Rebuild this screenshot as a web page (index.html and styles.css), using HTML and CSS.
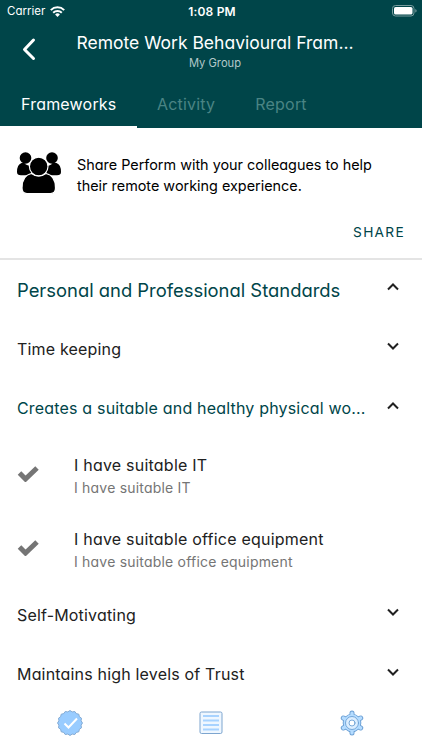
FILE: index.html
```html
<!DOCTYPE html>
<html lang="en">
<head>
<meta charset="UTF-8" />
<meta name="viewport" content="width=device-width, initial-scale=1" />
<title>Remote Work Behavioural Framework</title>
<link rel="stylesheet" href="styles.css">
</head>
<body>
  <header class="header">
    <div class="status-bar">
      <div class="carrier">
        <span>Carrier</span>
        <svg class="wifi" viewBox="0 0 15 11" width="15" height="11" fill="none" stroke="#fff" stroke-width="2">
          <path d="M.8 4.1a9.5 9.5 0 0 1 13.4 0M3.2 6.7a6.1 6.1 0 0 1 8.6 0" />
          <path d="M5.1 8.4a3.5 3.5 0 0 1 4.8 0L7.5 10.9z" fill="#fff" stroke="none" />
        </svg>
      </div>
      <span class="clock">1:08 PM</span>
      <svg class="battery" viewBox="0 0 25 12" width="25" height="12">
        <rect x=".5" y=".5" width="21.500" height="10.500" rx="3" fill="none" stroke="#779b9d" />
        <rect x="2" y="2" width="18.500" height="7.500" rx="1.600" fill="#fff" />
        <path d="M23.300 4v3.600q1.300-.4 1.300-1.800T23.300 4z" fill="#779b9d" />
      </svg>
    </div>
    <div class="title-bar">
      <svg class="back" viewBox="0 0 14 24" width="14" height="24" fill="none" stroke="#fff" stroke-width="3" stroke-linecap="round" stroke-linejoin="round">
        <path d="M11.500 3 2.500 12.500l9 9" />
      </svg>
      <div class="titles">
        <h1>Remote Work Behavioural Fram...</h1>
        <p>My Group</p>
      </div>
    </div>
    <nav class="tabs">
      <a class="tab active">Frameworks</a>
      <a class="tab">Activity</a>
      <a class="tab">Report</a>
    </nav>
  </header>

  <section class="share-card">
    <div class="share-body">
      <svg class="people" viewBox="0 0 44 42" width="44" height="42">
        <circle cx="8.500" cy="6" r="5.800" />
        <circle cx="35" cy="6" r="5.800" />
        <path d="M4.500 11Q0 12.500 0 20q0 3.300 4 3.300h10.500V14Q9 13.500 7.500 11zM39.500 11Q44 12.500 44 20q0 3.300-4 3.300H29.500V14q4.500-.5 6-3z" />
        <path d="M14.500 21.500Q5 23.500 5 36q0 5.500 5 5.500h23.500q5 0 5-5.500 0-12.500-9.500-14.500-7.500 5-14.500 0z" stroke="#fff" stroke-width="1.200" />
        <circle cx="21.700" cy="14.500" r="9.300" stroke="#fff" stroke-width="1.200" />
      </svg>
      <p>Share Perform with your colleagues to help<br>their remote working experience.</p>
    </div>
    <a class="share-btn">SHARE</a>
  </section>

  <main class="list">
    <div class="row open">
      <h2>Personal and Professional Standards</h2>
      <svg class="chevron" viewBox="0 0 12 8"><path d="M1 6.500 6 1.500l5 5" /></svg>
    </div>
    <div class="row">
      <h3>Time keeping</h3>
      <svg class="chevron" viewBox="0 0 12 8"><path d="m1 1.500 5 5 5-5" /></svg>
    </div>
    <div class="row open">
      <h3>Creates a suitable and healthy physical wo...</h3>
      <svg class="chevron" viewBox="0 0 12 8"><path d="M1 6.500 6 1.500l5 5" /></svg>
    </div>
    <div class="item">
      <svg class="check" viewBox="0 0 22 17"><path d="m2.500 8 6 6L20 3" /></svg>
      <div>
        <h4>I have suitable IT</h4>
        <p>I have suitable IT</p>
      </div>
    </div>
    <div class="item">
      <svg class="check" viewBox="0 0 22 17"><path d="m2.500 8 6 6L20 3" /></svg>
      <div>
        <h4>I have suitable office equipment</h4>
        <p>I have suitable office equipment</p>
      </div>
    </div>
    <div class="row">
      <h3>Self-Motivating</h3>
      <svg class="chevron" viewBox="0 0 12 8"><path d="m1 1.500 5 5 5-5" /></svg>
    </div>
    <div class="row">
      <h3>Maintains high levels of Trust</h3>
      <svg class="chevron" viewBox="0 0 12 8"><path d="m1 1.500 5 5 5-5" /></svg>
    </div>
  </main>

  <nav class="bottom-nav">
    <a>
      <svg viewBox="0 0 26 26" width="26" height="26">
        <polygon points="13,.5 15.2,1.9 17.8,1.5 19.3,3.6 21.8,4.2 22.4,6.7 24.5,8.2 24.1,10.8 25.5,13 24.1,15.2 24.5,17.8 22.4,19.3 21.8,21.8 19.3,22.4 17.8,24.5 15.2,24.1 13,25.5 10.8,24.1 8.2,24.5 6.7,22.4 4.2,21.8 3.6,19.3 1.5,17.8 1.9,15.2 .5,13 1.9,10.8 1.5,8.2 3.6,6.7 4.2,4.2 6.7,3.6 8.2,1.5 10.8,1.9" fill="#99ccff" stroke="#7da5cf" stroke-width=".9" />
        <path d="m7.500 13.500 4 4 8.500-9" fill="none" stroke="#fff" stroke-width="2" />
      </svg>
    </a>
    <a>
      <svg viewBox="0 0 26 26" width="26" height="26">
        <rect x="2" y="2" width="22" height="21.500" rx="1.500" fill="#eff7ff" stroke="#7da5cf" />
        <path d="M5 6h16M5 10.500h16M5 15h16M5 19.500h16" stroke="#a8d3ff" stroke-width="2" />
      </svg>
    </a>
    <a>
      <svg viewBox="0 0 26 26" width="26" height="26" stroke-linecap="round">
        <path d="M13 3v20M4.300 8l17.400 10M21.700 8 4.300 18" stroke="#6b9fd4" stroke-width="5" />
        <circle cx="13" cy="13" r="9.300" fill="#6b9fd4" />
        <circle cx="13" cy="13" r="8.400" fill="#b5dcff" />
        <path d="M13 3v20M4.300 8l17.400 10M21.700 8 4.300 18" stroke="#b5dcff" stroke-width="3.200" />
        <circle cx="13" cy="13" r="6.500" fill="#dceeff" stroke="#6b9fd4" stroke-width=".9" />
        <circle cx="13" cy="13" r="3" fill="#fff" stroke="#6b9fd4" stroke-width=".9" />
      </svg>
    </a>
  </nav>
</body>
</html>
```

FILE: styles.css
```css
* {
  box-sizing: border-box;
  margin: 0;
  padding: 0;
}
body {
  width: 422px;
  height: 750px;
  overflow: hidden;
  display: flex;
  flex-direction: column;
  background: #fff;
  color: #212121;
  font-family: Inter, Lato, sans-serif;
  font-feature-settings: "cv11";
}
h1, h2, h3, h4 {
  font-weight: 400;
  white-space: nowrap;
}
.header {
  height: 128px;
  flex-shrink: 0;
  background: #004549;
  color: #fff;
  display: flex;
  flex-direction: column;
}
.status-bar {
  height: 22px;
  display: grid;
  grid-template-columns: 1fr auto 1fr;
  align-items: center;
  padding: 0 5px 0 7px;
}
.carrier {
  display: flex;
  align-items: center;
  gap: 5px;
  font-size: 11.5px;
}
.clock {
  font-size: 12px;
  font-weight: 600;
  letter-spacing: 0.2px;
}
.battery {
  justify-self: end;
}
.title-bar {
  height: 59px;
  display: flex;
  padding-left: 22px;
}
.back {
  margin-top: 15px;
}
.titles {
  width: 358px;
  text-align: center;
}
.titles h1 {
  font-size: 17.5px;
  line-height: 24px;
  margin-top: 9px;
}
.titles p {
  font-size: 11.2px;
  line-height: 16px;
  color: #b3c8c9;
}
.tabs {
  height: 47px;
  display: flex;
}
.tab {
  padding: 13px 20px 0;
  font-size: 16px;
  line-height: 21px;
  letter-spacing: 0.2px;
  color: #4a8484;
}
.tab.active {
  width: 137px;
  padding-left: 21px;
  color: #fff;
  border-bottom: 2px solid #fff;
}
.share-card {
  height: 132px;
  flex-shrink: 0;
  padding: 24px 17px 0;
  border-bottom: 2px solid #e4e4e4;
  display: flex;
  flex-direction: column;
  color: #000;
}
.share-body {
  display: flex;
  gap: 16px;
}
.share-body p {
  padding-top: 2px;
  font-size: 14.4px;
  line-height: 21px;
  white-space: nowrap;
}
.share-btn {
  align-self: flex-end;
  margin-top: 26px;
  font-size: 13.7px;
  line-height: 20px;
  letter-spacing: 1.3px;
  color: #004549;
}
.list {
  flex: 1;
  min-height: 0;
  overflow: hidden;
}
.row {
  height: 59.3px;
  padding: 0 23px 0 17px;
  display: flex;
  align-items: center;
  justify-content: space-between;
}
.row h2 {
  font-size: 18.4px;
}
.row h3 {
  font-size: 16px;
  letter-spacing: 0.18px;
}
.open h2, .open h3 {
  color: #004549;
}
.chevron {
  width: 12px;
  height: 8px;
  margin-bottom: 5px;
  fill: none;
  stroke: #212121;
  stroke-width: 2;
}
.item {
  height: 73.7px;
  padding: 15px 17px 0;
  display: flex;
  gap: 35px;
}
.check {
  width: 22px;
  height: 17px;
  margin-top: 12px;
  fill: none;
  stroke: #757575;
  stroke-width: 5;
}
.item h4 {
  font-size: 16px;
  line-height: 24px;
  letter-spacing: 0.22px;
}
.item p {
  font-size: 14px;
  line-height: 22px;
  letter-spacing: 0.2px;
  color: #757575;
}
.bottom-nav {
  height: 54px;
  flex-shrink: 0;
  display: grid;
  grid-template-columns: repeat(3, 1fr);
  justify-items: center;
  padding-top: 14px;
  background: #fff;
}
```
